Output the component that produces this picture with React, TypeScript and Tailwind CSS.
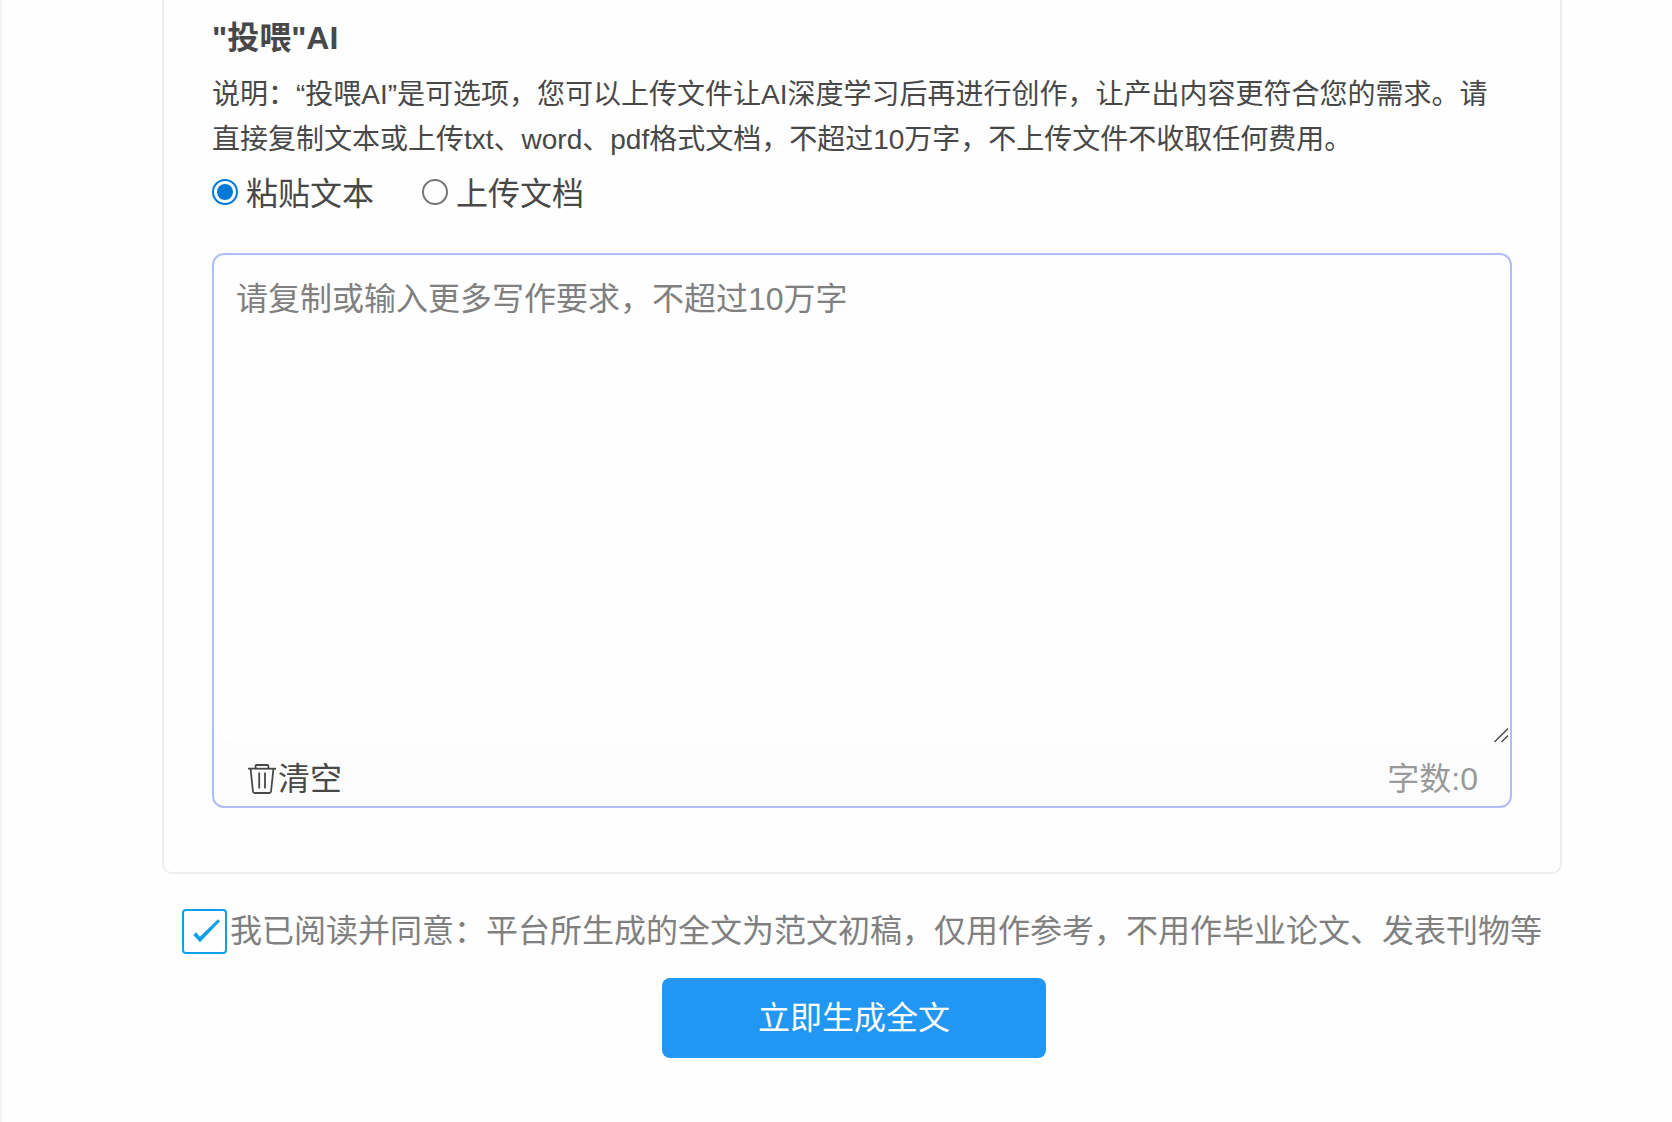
import { useState } from 'react';
import { clsx } from 'clsx';

type FeedMode = 'paste' | 'upload';

const modes: { value: FeedMode; label: string }[] = [
  { value: 'paste', label: '粘贴文本' },
  { value: 'upload', label: '上传文档' },
];

function TrashIcon() {
  return (
    <svg viewBox="0 0 28 30" className="h-[30px] w-7" fill="none" stroke="currentColor" strokeWidth="1.8" aria-hidden="true">
      <path d="M0 4.7H28" />
      <path d="M7.6 4.5V1.9Q7.6 1 8.5 1H19.5Q20.4 1 20.4 1.9V4.5" />
      <path d="M2.6 5L4.9 27Q5.1 29 7 29H21Q22.9 29 23.1 27L25.4 5" />
      <path d="M11.2 8.5V24.5M17 8.5V24.5" />
    </svg>
  );
}

function ResizeGrip() {
  return (
    <svg
      viewBox="0 0 15 15"
      className="pointer-events-none absolute right-px bottom-0 h-[15px] w-[15px] text-[#444444]"
      fill="none"
      stroke="currentColor"
      strokeWidth="1.4"
      aria-hidden="true"
    >
      <path d="M0.5 14L14 0.5M7.5 14L14 7.5" />
    </svg>
  );
}

export default function App() {
  const [mode, setMode] = useState<FeedMode>('paste');
  const [text, setText] = useState('');
  const [agreed, setAgreed] = useState(true);

  return (
    <main
      lang="zh-CN"
      className="min-h-screen border-l-2 border-[#f4f4f4] bg-[#fefefe] pr-[110px] pl-40 font-['Liberation_Sans','Noto_Sans_CJK_SC',sans-serif] text-[32px] leading-12 text-[#484848]"
    >
      <section className="rounded-b-[10px] border-2 border-t-0 border-[#eeeeee] px-12 pt-3.5 pb-16">
        <h2 className="font-bold">"投喂"AI</h2>
        <p className="mt-2.5 text-[28px] leading-[45px]">
          说明：“投喂AI”是可选项，您可以上传文件让AI深度学习后再进行创作，让产出内容更符合您的需求。请直接复制文本或上传txt、word、pdf格式文档，不超过10万字，不上传文件不收取任何费用。
        </p>

        <div className="mt-2 flex gap-12">
          {modes.map(({ value, label }) => (
            <label key={value} className="flex items-center gap-2">
              <input
                type="radio"
                name="feed-mode"
                value={value}
                checked={mode === value}
                onChange={() => setMode(value)}
                className="mb-1 h-[26px] w-[26px] appearance-none rounded-full border-2 border-[#767676] bg-clip-content p-[3px] checked:border-[#0078d7] checked:bg-[#0078d7]"
              />
              {label}
            </label>
          ))}
        </div>

        <div className="mt-[35px] overflow-hidden rounded-xl border-2 border-[#b0bdf8] bg-[#fcfcfc]">
          <div className="relative">
            <textarea
              aria-label="写作要求"
              value={text}
              onChange={(e) => setText(e.target.value)}
              placeholder="请复制或输入更多写作要求，不超过10万字"
              className="block h-[488px] w-full resize-none rounded-[20px] bg-[#fefefe] px-[22px] py-5 outline-none placeholder:text-[#808080]"
            />
            <ResizeGrip />
          </div>
          <div className="flex h-[63px] items-center justify-between px-8 pt-2">
            <button type="button" onClick={() => setText('')} className="flex items-center gap-0.5 pl-0.5">
              <TrashIcon />
              清空
            </button>
            <span className="text-[#999999]">字数:{text.length}</span>
          </div>
        </div>
      </section>

      <label className="mt-[33px] flex items-center justify-center gap-[3px] text-[#808080]">
        <span className="relative shrink-0">
          <input
            type="checkbox"
            checked={agreed}
            onChange={(e) => setAgreed(e.target.checked)}
            className="block h-[45px] w-[45px] appearance-none rounded border-2 border-[#0d9fe9]"
          />
          <svg
            viewBox="0 0 45 45"
            className={clsx('pointer-events-none absolute inset-0 text-[#0d9fe9]', !agreed && 'hidden')}
            fill="currentColor"
            aria-hidden="true"
          >
            <path d="M11.3 26L14 23.3L17.9 27.7L36 10.3L38 12.3L18 33.3Z" />
          </svg>
        </span>
        我已阅读并同意：平台所生成的全文为范文初稿，仅用作参考，不用作毕业论文、发表刊物等
      </label>

      <div className="mt-[23px] flex justify-center pr-4">
        <button type="button" disabled={!agreed} className="h-20 w-96 rounded-lg bg-[#2196f3] text-white">
          立即生成全文
        </button>
      </div>
    </main>
  );
}
